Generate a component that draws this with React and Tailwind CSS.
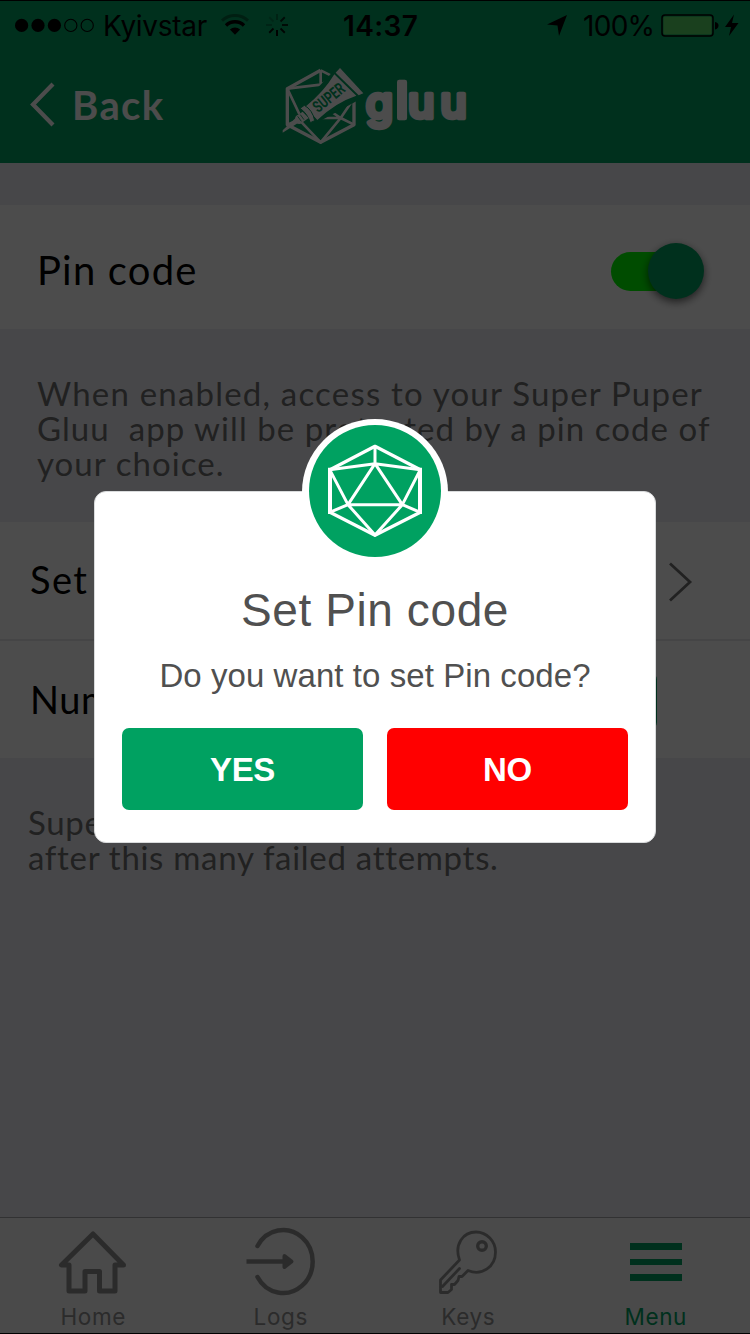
import React from "react";

function SignalDots() {
  return (
    <svg width="82" height="16" viewBox="0 0 82 16" className="block">
      {[0, 1, 2, 3, 4].map((i) => (
        <circle key={i} cx={7.6 + i * 16.4} cy="8.4" r={i < 3 ? 6.6 : 6.1} fill={i < 3 ? "#000" : "none"} stroke="#000" strokeWidth={i < 3 ? 0 : 1.1} />
      ))}
    </svg>
  );
}

function Wifi() {
  return (
    <svg width="30" height="22" viewBox="0 0 30 22" fill="none" className="block">
      <path d="M2 6.6A19 19 0 0 1 28 6.6" stroke="#000" strokeOpacity=".35" strokeWidth="3" />
      <path d="M6 11.4A13 13 0 0 1 24 11.4" stroke="#000" strokeWidth="3.4" />
      <path d="M9.9 15.4A7.5 7.5 0 0 1 20.1 15.4L15 20.8Z" fill="#000" />
    </svg>
  );
}

function Spinner() {
  const rays = [0.3, 0.75, 0.8, 0.9, 1, 0.9, 0.25, 0.2];
  return (
    <svg width="24" height="24" viewBox="-12 -12 24 24" className="block">
      {rays.map((o, i) => (
        <line key={i} x1="0" y1="-5" x2="0" y2="-11" stroke="#000" strokeWidth="1.9" strokeOpacity={o} transform={`rotate(${i * 45})`} />
      ))}
    </svg>
  );
}

function StatusBar() {
  return (
    <div className="relative flex h-[51px] items-start font-['Inter',sans-serif] text-[28px] leading-[28px] text-black">
      <div className="flex h-[51px] w-[343px] items-start pl-[14px]">
        <div className="pt-[17px]"><SignalDots /></div>
        <div className="ml-[7px] w-[105px] pt-[12px] tracking-[-0.3px] whitespace-nowrap">Kyivstar</div>
        <div className="ml-[12px] pt-[14px]"><Wifi /></div>
        <div className="ml-[15px] pt-[13px]"><Spinner /></div>
      </div>
      <div className="w-[204px] pt-[12px] font-semibold tracking-[0.4px]">14:37</div>
      <svg width="21" height="22" viewBox="0 0 21 22" className="mt-[15px] block"><path d="M20 0L12 21L10.5 10.5L0 9.5Z" fill="#000" /></svg>
      <div className="ml-[15px] w-[78px] pt-[12px] tracking-[-0.7px]">100%</div>
      <svg width="80" height="24" viewBox="0 0 80 24" className="mt-[14px] block">
        <rect x="1" y="1" width="51" height="21" rx="3" fill="none" stroke="#000" strokeWidth="1.5" />
        <rect x="2.4" y="2.4" width="48.2" height="18.2" rx="1.5" fill="#57d564" />
        <path d="M54 8Q57.5 8.5 57.5 11.5T54 15.5Z" fill="#000" />
        <path d="M73 0.5L64 13H70L68 22L77.500 9H71Z" fill="#000" />
      </svg>
    </div>
  );
}

function Logo() {
  return (
    <svg width="210" height="95" viewBox="0 0 630 285" className="block">
      <g fill="none" stroke="#fff" strokeWidth="10" strokeLinejoin="round">
        <path d="M152 31L52 86V194L152 247L252 194V112" />
        <path d="M152 31L200 55M152 31V74L52 86M152 74L195 52M52 86L88 162M52 194L85 180M90 182L152 247L212 174L252 194M214 174H138M212 174L252 115M212 174L176 150" strokeWidth="8" />
      </g>
      <path d="M190 34L270 118L138 190L88 142Z" fill="#00a161" />
      <path d="M210 24L280 100L266 106L197 38Z" fill="#fff" />
      <path d="M193 43L259 107Q196 128 142 180L106 140Q160 98 193 43Z" fill="#fff" />
      <path d="M90 145L103 136Q128 150 134 182L121 188Q112 160 90 145Z" fill="#fff" stroke="#00a161" strokeWidth="3" />
      <path d="M98 155L78 168Q72 176 78 188Q88 196 96 188L116 174Z" fill="#fff" />
      <path d="M83 169L94 184M91 164L102 179" stroke="#00a161" strokeWidth="2.5" />
      <path d="M76 175L38 211V218L85 188Z" fill="#fff" />
      <text x="0" y="0" transform="translate(145 160) rotate(-39)" fill="#00a161" fontFamily="Roboto, sans-serif" fontWeight="700" fontSize="49" textLength="108" lengthAdjust="spacingAndGlyphs">SUPER</text>
      <svg x="280" y="0" width="314" height="285" viewBox="280 0 314 285">
        <text y="173" fill="#fff" stroke="#fff" strokeWidth="14" strokeLinejoin="round" fontFamily="Inter, sans-serif" fontWeight="500" fontSize="132">
          <tspan x="287">g</tspan><tspan x="377" fontSize="150">l</tspan><tspan x="414">u</tspan><tspan x="511">u</tspan>
        </text>
      </svg>
    </svg>
  );
}

function NavBar() {
  return (
    <div className="flex h-[112px] items-start">
      <svg width="28" height="46" viewBox="0 0 28 46" className="mt-[31px] ml-[28px] block" fill="none">
        <path d="M25 2L5 22.500L25 43" stroke="#fff" strokeWidth="4.2" />
      </svg>
      <div className="ml-[16px] w-[198px] pt-[33px] font-['Lato',sans-serif] text-[40px] leading-[42px] font-bold tracking-[1.4px] text-white">Back</div>
      <div className="pt-[9px]"><Logo /></div>
    </div>
  );
}

function Toggle() {
  return (
    <div className="relative h-[57px] w-[94px]">
      <div className="absolute top-[9px] left-0 h-[39px] w-[80px] rounded-full bg-[#00ff00]" />
      <div className="absolute top-0 left-[37px] size-[56px] rounded-full bg-[#00a161] shadow-[0_3px_8px_rgba(0,0,0,0.6)]" />
    </div>
  );
}

function Tab({ label, color, children }) {
  return (
    <div className={"flex flex-1 flex-col items-center pr-px " + color}>
      <div className="h-[83px] pt-[8px]">{children}</div>
      <div className="font-['Inter',sans-serif] text-[22.5px] leading-[32px] tracking-[0.6px]">{label}</div>
    </div>
  );
}

function TabBar() {
  return (
    <div className="flex h-[116px] border-t border-[#a9a9ac] bg-[#f7f7f7]">
      <Tab label="Home" color="text-[#929292]">
        <svg width="70" height="72" viewBox="0.500 -3 70 72" fill="none" stroke="currentColor" strokeWidth="5" strokeLinejoin="round">
          <path d="M35.500 5L4 36H11.500V62H27.500V42.500H42V62H57.500V36H66Z" />
        </svg>
      </Tab>
      <Tab label="Logs" color="text-[#929292]">
        <svg width="70" height="72" viewBox="0.500 0 70 72" fill="none" stroke="currentColor" strokeWidth="4.500" strokeLinecap="round">
          <path d="M12 20A29.500 31.500 0 1 1 12 51" />
          <path d="M1 35.500H38" strokeLinecap="butt" />
          <path d="M39 30L46 35.500L39 41Z" fill="currentColor" strokeWidth="4" strokeLinejoin="round" />
        </svg>
      </Tab>
      <Tab label="Keys" color="text-[#929292]">
        <svg width="60" height="72" viewBox="-0.500 -3.500 60 72" fill="none" stroke="currentColor" strokeWidth="2.8" strokeLinejoin="round" strokeLinecap="round">
          <path d="M22.500 30.500C17 15 26 2.500 39 2.500C50 2.500 58.500 12 58.500 22.500C58.500 37 45 47 31 41L25 47H22L21 51L17.500 55H14.500V60L11 63H3.500V50.500Z" transform="translate(-1.500 0)" />
          <path d="M21 39L4 57" />
          <circle cx="43.500" cy="16.500" r="4.300" strokeWidth="3.4" />
        </svg>
      </Tab>
      <Tab label="Menu" color="text-[#00a161]">
        <div className="flex h-[50px] flex-col pt-[17px]">
          <div className="h-[7px] w-[52px] shrink-0 bg-[#00a161]" />
          <div className="mt-[9px] h-[6px] w-[52px] shrink-0 bg-[#00a161]" />
          <div className="mt-[9px] h-[7px] w-[52px] shrink-0 bg-[#00a161]" />
        </div>
      </Tab>
    </div>
  );
}

function Dialog() {
  return (
    <div className="absolute inset-0 bg-black/70">
      <div className="relative mt-[491px] ml-[94px] flex h-[352px] w-[562px] flex-col items-center rounded-[12px] border border-[#d9dbdc] bg-white pt-[94px] font-['Liberation_Sans',Arial,sans-serif] text-[#505050]">
        <div className="absolute -top-[73px] left-[207px] flex size-[146px] items-center justify-center rounded-full bg-white">
          <div className="-mt-[2px] -ml-px size-[132px] rounded-full bg-[#00a161]">
            <svg width="132" height="132" viewBox="57 46 396 396" fill="none" stroke="#fff" strokeLinejoin="round">
              <path d="M255 110L120 180V308L255 377L391 308V180Z" strokeWidth="10" />
              <path d="M120 174V313M390 174V313" strokeWidth="12" />
              <path d="M255 110V162L119 180L174 285L119 308M255 162L391 180L337 285L391 308M255 162L174 285H337ZM174 285L255 376L337 285" strokeWidth="9" />
            </svg>
          </div>
        </div>
        <h1 className="text-[46px] leading-[48px] tracking-[0.6px]">Set Pin code</h1>
        <p className="mt-[23px] text-[33px] leading-[38px] tracking-[0.07px]">Do you want to set Pin code?</p>
        <div className="mt-[33px] flex gap-[24px] text-[33px] leading-[83px] font-bold tracking-[-0.3px] text-white">
          <button className="h-[82px] w-[241px] rounded-[7px] bg-[#00a161]">YES</button>
          <button className="h-[82px] w-[241px] rounded-[7px] bg-[#ff0000]">NO</button>
        </div>
      </div>
    </div>
  );
}

export default function App() {
  return (
    <div className="relative flex h-[1334px] w-[750px] flex-col overflow-hidden border-b border-black bg-[#efeff4] font-['Lato',sans-serif]">
      <div className="bg-[#00a161]">
        <div className="-mb-px h-px bg-black" />
        <StatusBar />
        <NavBar />
      </div>
      <div className="mt-[42px] flex h-[124px] items-center justify-between bg-white pr-[45px] pl-[37px]">
        <div className="pt-[6px] text-[40px] leading-[44px] tracking-[1.2px] text-black">Pin code</div>
        <div className="pt-[9px]"><Toggle /></div>
      </div>
      <div className="h-[193px] pt-[47px] pl-[37px] text-[33px] leading-[35px] tracking-[1.05px] whitespace-pre text-[#707070]">
        <div className="tracking-[1.2px]">When enabled, access to your Super Puper</div>
        <div>Gluu  app will be protected by a pin code of</div>
        <div>your choice.</div>
      </div>
      <div className="flex h-[119px] items-center justify-between border-b-2 border-[#e6e6e9] bg-white pr-[57px] pb-[2px] pl-[30px] text-[38px] tracking-[1.4px] text-black">
        <div>Set Pin code</div>
        <svg width="24" height="40" viewBox="0 0 24 40" fill="none" className="mt-[4px]"><path d="M1 1.500L21 20L1 38.500" stroke="#707070" strokeWidth="2.800" /></svg>
      </div>
      <div className="flex h-[117px] items-center justify-between bg-white pr-[93px] pb-px pl-[30px] text-[38px] tracking-[0.6px] text-black">
        <div>Number of attempts</div>
        <div className="mt-[4px] h-[58px] w-[188px] rounded-[8px] border-2 border-[#00a161]" />
      </div>
      <div className="h-[459px] pt-[47px] pl-[28px] text-[33px] leading-[35px] tracking-[0.7px] text-[#707070]">
        <div>Super Gluu app will be locked</div>
        <div>after this many failed attempts.</div>
      </div>
      <TabBar />
      <Dialog />
    </div>
  );
}
